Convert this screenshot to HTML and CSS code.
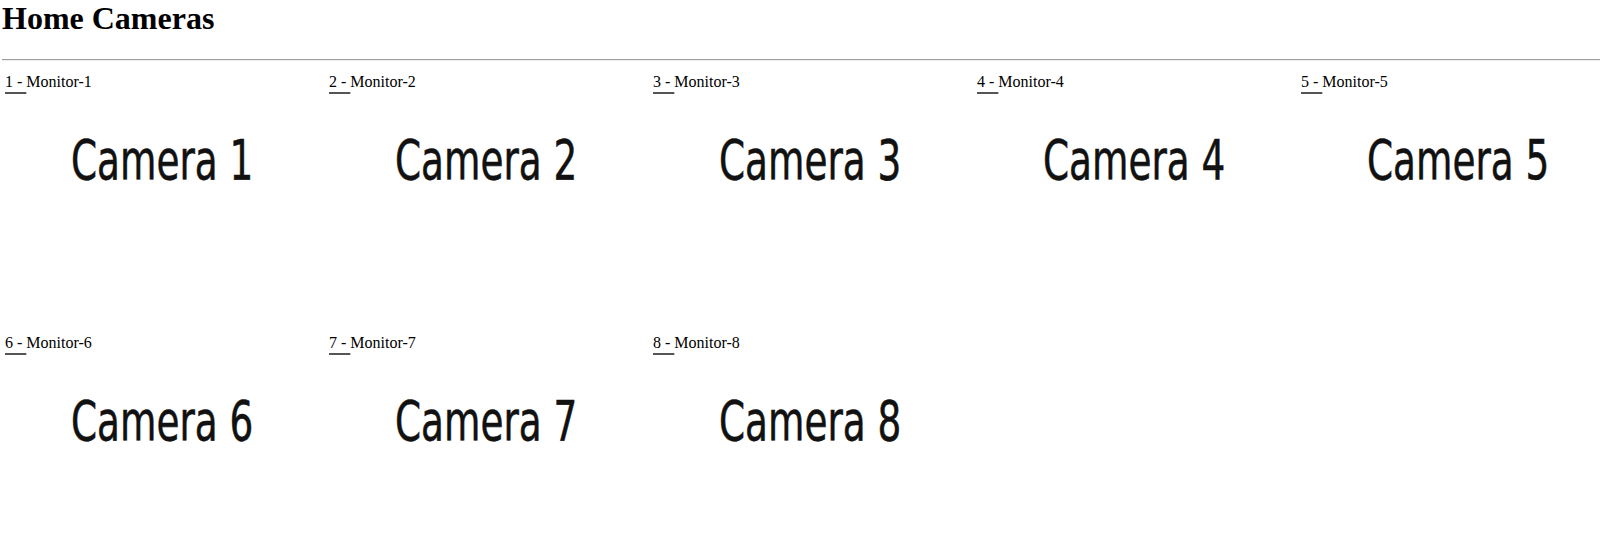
FILE: index.html
```html
<!DOCTYPE html>
<html lang="en">
<head>
  <meta charset="UTF-8">
  <title>Home Cameras</title>
  <link rel="stylesheet" href="styles.css">
</head>
<body>

  <h1>Home Cameras</h1>
  <hr>

  <div class="cameras">
    <div class="camera">
      <div class="label"><a href="#">1 - </a>Monitor-1</div>
      <div class="feed"><span>Camera 1</span></div>
    </div>
    <div class="camera">
      <div class="label"><a href="#">2 - </a>Monitor-2</div>
      <div class="feed"><span>Camera 2</span></div>
    </div>
    <div class="camera">
      <div class="label"><a href="#">3 - </a>Monitor-3</div>
      <div class="feed"><span>Camera 3</span></div>
    </div>
    <div class="camera">
      <div class="label"><a href="#">4 - </a>Monitor-4</div>
      <div class="feed"><span>Camera 4</span></div>
    </div>
    <div class="camera">
      <div class="label"><a href="#">5 - </a>Monitor-5</div>
      <div class="feed"><span>Camera 5</span></div>
    </div>
    <div class="camera">
      <div class="label"><a href="#">6 - </a>Monitor-6</div>
      <div class="feed"><span>Camera 6</span></div>
    </div>
    <div class="camera">
      <div class="label"><a href="#">7 - </a>Monitor-7</div>
      <div class="feed"><span>Camera 7</span></div>
    </div>
    <div class="camera">
      <div class="label"><a href="#">8 - </a>Monitor-8</div>
      <div class="feed"><span>Camera 8</span></div>
    </div>
  </div>

</body>
</html>
```

FILE: styles.css
```css
body {
  margin: 0;
  font-family: "Liberation Serif", "Times New Roman", serif;
  color: #000;
  background: #fff;
}
h1 {
  margin: 0;
  padding-left: 2px;
  font-size: 32px;
  line-height: 37px;
}
hr {
  height: 0;
  margin: 22px 8px 0 2px;
  border: 0;
  border-top: 1px solid #a0a0a0;
  border-bottom: 1px solid #ececec;
}
.cameras {
  display: grid;
  grid-template-columns: repeat(5, 324px);
  row-gap: 3px;
  margin-top: 12px;
  padding-left: 5px;
  overflow: hidden;
}
.label {
  font-size: 16px;
  line-height: 18px;
  white-space: nowrap;
}
.label a {
  color: #000;
  text-decoration: underline;
  text-decoration-color: #555;
  text-decoration-thickness: 2px;
  text-underline-offset: 5px;
}
.feed {
  width: 314px;
  height: 240px;
  padding-top: 42px;
  box-sizing: border-box;
  text-align: center;
}
.feed span {
  display: inline-block;
  font-family: "DejaVu Sans", Verdana, sans-serif;
  font-size: 55px;
  line-height: 55px;
  color: #111;
  -webkit-text-stroke: 0.6px #111;
  transform: scaleX(0.68);
}
```
